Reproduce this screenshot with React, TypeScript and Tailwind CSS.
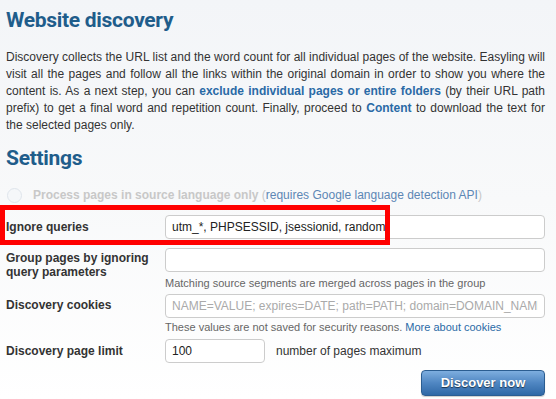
import React from 'react';

export default function App() {
  return (
    <div className="w-[556px] h-[399px] overflow-hidden bg-gradient-to-b from-[#f3f5f8] via-[#f8f9fa] to-white font-['Liberation_Sans',Arial,sans-serif] text-[#333]">
      <div className="pl-[6px] pr-[11px]">
        {/* Header */}
        <h1 className="pt-[7px] text-[21px] leading-[26px] font-bold tracking-[-0.3px] text-[#1f5d8b] font-['Roboto',sans-serif]">
          Website discovery
        </h1>
        <p className="mt-[16px] text-[12px] leading-[17px] text-justify">
          Discovery collects the URL list and the word count for all individual pages of the website. Easyling will
          visit all the pages and follow all the links within the original domain in order to show you where the
          content is. As a next step, you can{' '}
          <a className="font-bold text-[#2a6aa6]">exclude individual pages or entire folders</a> (by their URL path
          prefix) to get a final word and repetition count. Finally, proceed to{' '}
          <a className="font-bold text-[#2a6aa6]">Content</a> to download the text for the selected pages only.
        </p>

        <h2 className="mt-[11px] text-[21px] leading-[26px] font-bold tracking-[-0.3px] text-[#1f5d8b] font-['Roboto',sans-serif]">
          Settings
        </h2>

        {/* Disabled radio */}
        <div className="mt-[16px] flex items-center gap-[11px] h-[16px] pl-[1px]">
          <span className="size-[15px] rounded-full border border-[#dfe5ec] bg-[#f5f7f9]" />
          <span className="text-[12px] whitespace-nowrap">
            <span className="font-bold text-[#c8c8c8]">Process pages in source language only</span>{' '}
            <span className="text-[#c8c8c8]">(</span>
            <span className="text-[#5d87b5]">requires Google language detection API</span>
            <span className="text-[#c8c8c8]">)</span>
          </span>
        </div>

        {/* Ignore queries */}
        <div className="relative mt-[12px] grid grid-cols-[159px_1fr]">
          <label className="text-[12px] font-bold leading-[24px]">Ignore queries</label>
          <input
            defaultValue="utm_*, PHPSESSID, jsessionid, random"
            className="h-[24px] rounded-[4px] border border-[#ccc] bg-white px-[6px] text-[12px] text-[#222] outline-none"
          />
          <div className="absolute -left-[6px] -top-[10px] w-[390px] h-[40px] border-[5px] border-[#ff0000] pointer-events-none" />
        </div>

        {/* Group pages */}
        <div className="mt-[8px] grid grid-cols-[159px_1fr]">
          <label className="pt-[4px] text-[12px] font-bold leading-[14px]">
            Group pages by ignoring
            <br />
            query parameters
          </label>
          <div>
            <input className="w-full h-[24px] rounded-[4px] border border-[#ccc] bg-white px-[6px] text-[12px] outline-none" />
            <p className="mt-[4px] text-[11px] leading-[14px] text-[#666]">
              Matching source segments are merged across pages in the group
            </p>
          </div>
        </div>

        {/* Cookies */}
        <div className="mt-[3px] grid grid-cols-[159px_1fr]">
          <label className="text-[12px] font-bold leading-[24px]">Discovery cookies</label>
          <div>
            <input
              placeholder="NAME=VALUE; expires=DATE; path=PATH; domain=DOMAIN_NAME; secure"
              className="w-full h-[24px] rounded-[4px] border border-[#ccc] bg-white px-[6px] text-[12px] placeholder:text-[#aaa] outline-none"
            />
            <p className="mt-[2px] text-[11px] leading-[14px] text-[#666]">
              These values are not saved for security reasons.{' '}
              <a className="text-[#2a6aa6]">More about cookies</a>
            </p>
          </div>
        </div>

        {/* Page limit */}
        <div className="mt-[5px] grid grid-cols-[159px_1fr]">
          <label className="text-[12px] font-bold leading-[24px]">Discovery page limit</label>
          <div className="flex items-center gap-[11px]">
            <input
              defaultValue="100"
              className="w-[100px] h-[24px] rounded-[4px] border border-[#ccc] bg-white px-[6px] text-[12px] text-[#222] outline-none"
            />
            <span className="text-[12px]">number of pages maximum</span>
          </div>
        </div>

        <div className="mt-[7px] flex justify-end">
          <button className="w-[124px] h-[26px] rounded-[4px] border border-[#2b5d91] bg-gradient-to-b from-[#7eaedf] via-[#4f86c2] to-[#2f68a6] text-[13px] font-bold text-white [text-shadow:0_1px_1px_rgba(0,0,0,0.6)] shadow-[0_1px_1px_rgba(0,0,0,0.2)]">
            Discover now
          </button>
        </div>

        <p className="pl-[159px] mt-[2px] text-[11px] leading-[14px] text-[#bbb] whitespace-nowrap">
          Depending on the size of the website, discovery may take a while. The results are saved.
        </p>
      </div>
    </div>
  );
}
